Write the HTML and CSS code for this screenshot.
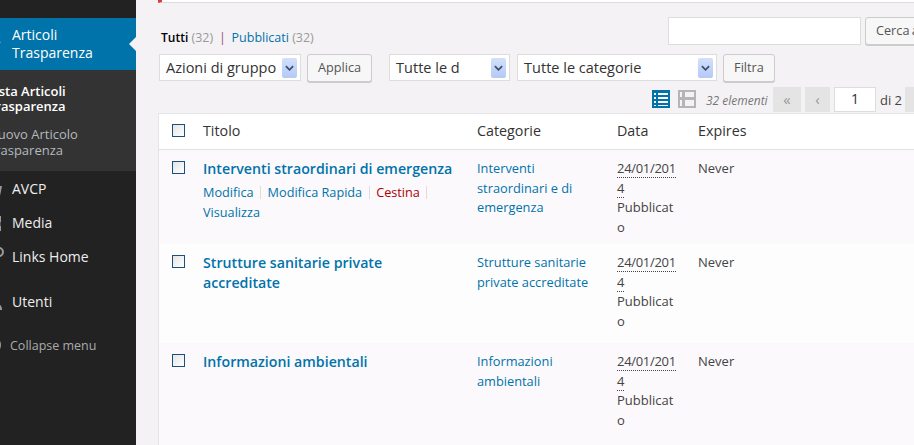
FILE: index.html
```html
<!DOCTYPE html>
<html lang="it">
<head>
    <meta charset="UTF-8">
    <title>Articoli Trasparenza</title>
    <link rel="stylesheet" href="styles.css">
</head>
<body>
    <div class="sidebar">
        <div class="menu-current">
            <svg class="menu-icon" viewBox="0 0 20 20"><path d="M10 2l1 4 4 3-2 2 4 6-6-4-2 2-3-4-4-1z" fill="#fff"/></svg>
            <span>Articoli Trasparenza</span>
        </div>
        <ul class="submenu">
            <li class="sub-active">Lista Articoli Trasparenza</li>
            <li>Nuovo Articolo Trasparenza</li>
        </ul>
        <div class="menu-item">
            <svg class="menu-icon" viewBox="0 0 20 20"><path d="M2 5h6l2 2h8l-2 10H4z" fill="#999"/></svg>
            <span>AVCP</span>
        </div>
        <div class="menu-item">
            <svg class="menu-icon" viewBox="0 0 20 20"><path d="M3 3h14v15H3z" fill="#999"/><path d="M14 9h3v4h-3z" fill="#456"/></svg>
            <span>Media</span>
        </div>
        <div class="menu-item">
            <svg class="menu-icon" viewBox="0 0 20 20"><circle cx="15" cy="5" r="4" fill="none" stroke="#999" stroke-width="2"/><path d="M12 9l-8 8" stroke="#999" stroke-width="2"/></svg>
            <span>Links Home</span>
        </div>
        <div class="menu-item menu-gap">
            <svg class="menu-icon" viewBox="0 0 20 20"><circle cx="10" cy="6" r="4" fill="#999"/><path d="M2 18c0-6 4-7 8-7s8 1 8 7z" fill="#999"/></svg>
            <span>Utenti</span>
        </div>
        <div class="collapse">
            <svg class="menu-icon" viewBox="0 0 20 20"><circle cx="10" cy="10" r="9" fill="#999"/></svg>
            <span>Collapse menu</span>
        </div>
    </div>

    <div class="main">
        <div class="topbar"></div>
        <div class="wrap">
            <div class="top-row">
                <p class="views"><strong>Tutti</strong> <span class="count">(32)</span> <span class="sep">|</span> <a>Pubblicati</a> <span class="count">(32)</span></p>
                <div class="search">
                    <div class="text-input"></div>
                    <div class="button search-button">Cerca articoli</div>
                </div>
            </div>
            <div class="filters">
                <div class="select select-bulk"><span>Azioni di gruppo</span><b class="arrow"><svg viewBox="0 0 10 6"><path d="M1 1l4 4 4-4" fill="none" stroke="#3d4f73" stroke-width="2"/></svg></b></div>
                <div class="button">Applica</div>
                <div class="select select-date"><span>Tutte le d</span><b class="arrow"><svg viewBox="0 0 10 6"><path d="M1 1l4 4 4-4" fill="none" stroke="#3d4f73" stroke-width="2"/></svg></b></div>
                <div class="select select-cat"><span>Tutte le categorie</span><b class="arrow"><svg viewBox="0 0 10 6"><path d="M1 1l4 4 4-4" fill="none" stroke="#3d4f73" stroke-width="2"/></svg></b></div>
                <div class="button">Filtra</div>
            </div>
            <div class="pager">
                <svg class="view-icon" viewBox="0 0 18 18"><path d="M0 0h18v18H0z" fill="#0073aa"/><path d="M2 3h2v2H2zM6 3h10v2H6zM2 7h2v2H2zM6 7h10v2H6zM2 11h2v2H2zM6 11h10v2H6zM2 15h2v1H2zM6 15h10v1H6z" fill="#fff"/></svg>
                <svg class="view-icon view-excerpt" viewBox="0 0 18 18"><path d="M0 0h18v18H0z" fill="#b5b5b5"/><path d="M2 2h2v5H2zM7 2h9v5H7zM2 10h2v6H2zM7 10h9v6H7z" fill="#f5f2f5"/></svg>
                <span class="num">32 elementi</span>
                <span class="page-btn page-first">«</span>
                <span class="page-btn">‹</span>
                <span class="page-input">1</span>
                <span class="page-of">di 2</span>
                <span class="page-btn page-first">›</span>
            </div>
            <table class="list">
                <thead>
                    <tr>
                        <th class="col-check"><i class="check"></i></th>
                        <th class="col-title">Titolo</th>
                        <th class="col-cat">Categorie</th>
                        <th class="col-date">Data</th>
                        <th>Expires</th>
                    </tr>
                </thead>
                <tbody>
                    <tr class="odd">
                        <td class="cell-check"><i class="check"></i></td>
                        <td>
                            <a class="title">Interventi straordinari di emergenza</a>
                            <div class="actions"><a>Modifica</a><u></u><a>Modifica Rapida</a><u></u><a class="trash">Cestina</a><u></u><a>Visualizza</a></div>
                        </td>
                        <td><a class="cat">Interventi straordinari e di emergenza</a></td>
                        <td><abbr>24/01/2014</abbr><br>Pubblicato</td>
                        <td>Never</td>
                    </tr>
                    <tr class="tall">
                        <td class="cell-check"><i class="check"></i></td>
                        <td><a class="title">Strutture sanitarie private accreditate</a></td>
                        <td><a class="cat">Strutture sanitarie private accreditate</a></td>
                        <td><abbr>24/01/2014</abbr><br>Pubblicato</td>
                        <td>Never</td>
                    </tr>
                    <tr class="odd last">
                        <td class="cell-check"><i class="check"></i></td>
                        <td><a class="title">Informazioni ambientali</a></td>
                        <td><a class="cat">Informazioni ambientali</a></td>
                        <td><abbr>24/01/2014</abbr><br>Pubblicato</td>
                        <td>Never</td>
                    </tr>
                </tbody>
            </table>
        </div>
    </div>
</body>
</html>
```

FILE: styles.css
```css
html, body {
    height: 100%;
    overflow: hidden;
}
body {
    margin: 0;
    display: flex;
    font-family: "Open Sans", sans-serif;
    font-size: 13px;
    color: #444;
    background: #f5f2f5;
}
a {
    color: #0073aa;
}

/* sidebar, scrolled 24px off the left edge */
.sidebar {
    flex: 0 0 136px;
    overflow: hidden;
    background: #222;
    padding-top: 18px;
    color: #eee;
    font-size: 14px;
}
.sidebar > div, .submenu {
    width: 160px;
    margin-left: -24px;
    box-sizing: border-box;
}
.menu-icon {
    flex: 0 0 20px;
    width: 20px;
    height: 20px;
    margin: 0 8px;
}
.menu-current {
    display: flex;
    align-items: flex-start;
    position: relative;
    background: #0073aa;
    color: #fff;
    padding: 8px 0;
    line-height: 18px;
}
.menu-current span {
    width: 100px;
}
.menu-current::after {
    content: "";
    position: absolute;
    left: 153px;
    top: 18px;
    border: 8px solid transparent;
    border-left: 0;
    border-right-color: #f5f2f5;
}
.submenu {
    list-style: none;
    margin-top: 0;
    margin-bottom: 0;
    padding: 9px 24px 8px 12px;
    background: #333;
    color: #b4b9be;
    font-size: 13px;
    line-height: 16px;
}
.submenu li {
    padding: 5px 0;
    width: 120px;
}
.submenu .sub-active {
    color: #fff;
    font-weight: 600;
    line-height: 15px;
    margin-bottom: 2px;
}
.menu-item {
    display: flex;
    align-items: center;
    height: 34px;
    line-height: 18px;
}
.menu-item:nth-child(3) {
    margin-top: 1px;
}
.menu-gap {
    margin-top: 11px;
}
.collapse {
    display: flex;
    align-items: center;
    margin-top: 9px;
    height: 34px;
    color: #aaa;
    font-size: 12.5px;
}
.collapse .menu-icon {
    margin-right: 8px;
    margin-left: 6px;
}

/* content */
.main {
    flex: 1;
    min-width: 0;
    overflow: hidden;
}
.topbar {
    height: 2px;
    background: #fff;
    border-bottom: 1px solid #ddd;
    border-left: 4px solid #dd3d36;
    margin-left: 22px;
}
.wrap {
    width: 810px;
    margin-left: 22px;
}
.top-row {
    display: flex;
    justify-content: space-between;
    height: 41px;
    padding-top: 14px;
}
.views {
    margin: 12px 0 0 3px;
    font-size: 12.5px;
    line-height: 18px;
}
.views strong {
    font-weight: 600;
    color: #000;
    font-size: 12px;
}
.count {
    color: #999;
}
.sep {
    color: #a04a80;
    margin: 0 2.5px;
}
.search {
    display: flex;
    gap: 4px;
}
.text-input {
    width: 191px;
    height: 26px;
    background: #fff;
    border: 1px solid #ddd;
}
.button {
    height: 26px;
    line-height: 25px;
    padding: 0 10px;
    background: #f7f7f7;
    border: 1px solid #ccc;
    border-radius: 3px;
    box-shadow: 0 1px 0 #ccc;
    color: #555;
    font-size: 12.7px;
    white-space: nowrap;
}
.search-button {
    width: 81px;
    word-spacing: -1px;
}
.filters {
    display: flex;
    align-items: center;
    gap: 6px;
    height: 27px;
    margin-top: -4px;
    padding-left: 1px;
}
.select {
    display: flex;
    align-items: center;
    justify-content: space-between;
    box-sizing: border-box;
    height: 27px;
    padding: 0 3px 0 6px;
    background: #fff;
    border: 1px solid #ddd;
    font-size: 14.5px;
    color: #333;
    white-space: nowrap;
}
.select-bulk {
    width: 142px;
}
.select-date {
    width: 121px;
    margin-left: 11px;
}
.select-cat {
    width: 200px;
    margin-left: 1px;
}
.arrow {
    display: flex;
    align-items: center;
    justify-content: center;
    width: 15px;
    height: 20px;
    background: linear-gradient(#d3e0fb, #b4c9f5);
    border-radius: 2px;
}
.arrow svg {
    width: 9px;
    height: 6px;
}
.pager {
    display: flex;
    align-items: center;
    height: 26px;
    margin-top: 6px;
    padding-left: 494px;
}
.view-icon {
    width: 18px;
    height: 18px;
    margin-top: -2px;
}
.view-excerpt {
    margin-left: 8px;
}
.num {
    margin-left: 10px;
    width: 67px;
    font-size: 12px;
    font-style: italic;
    color: #777;
}
.page-btn {
    width: 28px;
    height: 25px;
    line-height: 24px;
    text-align: center;
    background: #e4e4e4;
    color: #999;
    margin-right: 4px;
    font-size: 15px;
    margin-top: -1px;
}
.page-btn + .page-btn {
    width: 25px;
}
.page-input {
    width: 40px;
    height: 23px;
    line-height: 22px;
    text-align: center;
    background: #fff;
    border: 1px solid #ddd;
    color: #333;
    font-size: 14px;
    margin-top: -1px;
}
.page-of {
    margin: 0 5px 0 4px;
    width: 20px;
    white-space: nowrap;
}

/* list table */
.list {
    table-layout: fixed;
    width: 810px;
    border-collapse: collapse;
    border: 1px solid #e5e5e5;
    border-right: 0;
    background: #fefdfe;
}
.list th {
    height: 33px;
    padding: 0 10px 2px;
    text-align: left;
    font-size: 14.3px;
    font-weight: 400;
    color: #333;
    background: #fff;
    border-bottom: 1px solid #e1e1e1;
}
.col-check {
    width: 14px;
}
.col-title {
    width: 254px;
}
.col-cat {
    width: 120px;
}
.col-date {
    width: 61px;
}
.list td {
    vertical-align: top;
    padding: 9px 10px 7px;
    line-height: 19.5px;
    word-wrap: break-word;
}
.odd {
    background: #fcf9fc;
}
.list .tall td {
    padding-bottom: 12px;
}
.list .last td {
    padding-bottom: 40px;
}
.check {
    display: block;
    width: 11px;
    height: 11px;
    margin-left: 3px;
    border: 1px solid #1a4f7f;
    background: linear-gradient(135deg, #e4e4e4, #fff);
}
.list .cell-check {
    padding-top: 11px;
}
.title {
    display: block;
    font-size: 14.2px;
    font-weight: 600;
    line-height: 20px;
}
.cat {
    font-size: 12.8px;
}
.actions {
    margin-top: 3px;
    line-height: 20px;
    font-size: 12.7px;
}
.actions u {
    display: inline-block;
    width: 1px;
    height: 13px;
    margin: 0 6.5px;
    background: #ddd;
    vertical-align: -2px;
}
.trash {
    color: #a00;
}
abbr {
    border-bottom: 1px dotted #444;
    letter-spacing: -0.3px;
}
```
